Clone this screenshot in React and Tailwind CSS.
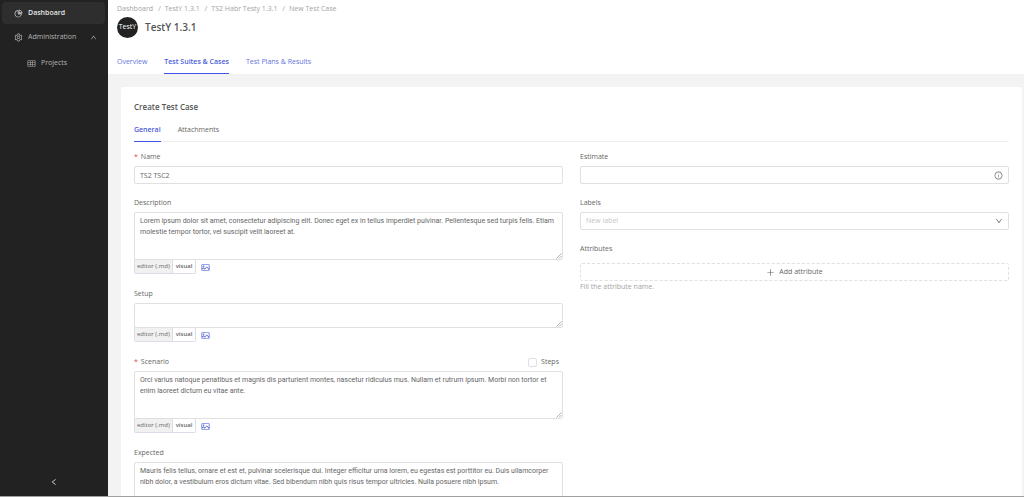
import { useState } from "react"
import {
  AiOutlineDown,
  AiOutlineInfoCircle,
  AiOutlineLeft,
  AiOutlinePicture,
  AiOutlinePieChart,
  AiOutlinePlus,
  AiOutlineSetting,
  AiOutlineTable,
  AiOutlineUp,
} from "react-icons/ai"

const BREADCRUMBS = ["Dashboard", "TestY 1.3.1", "TS2 Habr Testy 1.3.1", "New Test Case"]
const PROJECT_TABS = ["Overview", "Test Suites & Cases", "Test Plans & Results"]
const FORM_TABS = ["General", "Attachments"]

const INITIAL_VALUES = {
  name: "TS2 TSC2",
  description:
    "Lorem ipsum dolor sit amet, consectetur adipiscing elit. Donec eget ex in tellus imperdiet pulvinar. Pellentesque sed turpis felis. Etiam molestie tempor tortor, vel suscipit velit laoreet at.",
  setup: "",
  scenario:
    "Orci varius natoque penatibus et magnis dis parturient montes, nascetur ridiculus mus. Nullam et rutrum ipsum. Morbi non tortor et enim laoreet dictum eu vitae ante.",
  expected:
    "Mauris felis tellus, ornare et est et, pulvinar scelerisque dui. Integer efficitur urna lorem, eu egestas est porttitor eu. Duis ullamcorper nibh dolor, a vestibulum eros dictum vitae. Sed bibendum nibh quis risus tempor ultricies. Nulla posuere nibh ipsum.",
  estimate: "",
}

function Sidebar() {
  return (
    <aside className="flex w-[108px] shrink-0 flex-col bg-[#222222] text-[#b4b4b4]">
      <nav className="flex flex-1 flex-col gap-0.5 py-0.5 pr-[3px] pl-0.5">
        <a href="#dashboard" className="flex h-[22px] items-center gap-[5px] rounded-sm bg-[#2e2e2e] pl-3 font-semibold text-[#e6e6e6]">
          <AiOutlinePieChart className="size-[9px]" />
          Dashboard
        </a>
        <button type="button" className="flex h-[22px] items-center gap-[5px] pr-2 pl-3">
          <AiOutlineSetting className="size-[9px]" />
          Administration
          <AiOutlineUp className="ml-auto size-[7px]" />
        </button>
        <a href="#projects" className="flex h-[26px] items-center gap-[5px] pl-[25px]">
          <AiOutlineTable className="size-[9px]" />
          Projects
        </a>
      </nav>
      <button type="button" aria-label="Collapse menu" className="flex h-7 items-center justify-center text-[#e6e6e6]">
        <AiOutlineLeft className="size-2" />
      </button>
    </aside>
  )
}

function ProjectHeader() {
  const [active, setActive] = useState("Test Suites & Cases")

  return (
    <header className="bg-white px-[9px]">
      <nav aria-label="Breadcrumb" className="flex h-4 items-end gap-[5px] leading-[14px] text-[#a3a3a3]">
        {BREADCRUMBS.map((crumb, index) => (
          <span key={crumb} className="flex gap-1">
            {index > 0 && <span>/</span>}
            <a href="#crumb">{crumb}</a>
          </span>
        ))}
      </nav>
      <div className="mt-px flex items-center gap-[7px]">
        <span className="flex size-[21px] items-center justify-center rounded-full bg-[#222222] text-[7px] text-white">
          TestY
        </span>
        <h1 className="text-[10px] font-semibold text-[#555555]">TestY 1.3.1</h1>
      </div>
      <div className="mt-[13px] flex gap-[17px]">
        {PROJECT_TABS.map((tab) => (
          <button
            key={tab}
            type="button"
            onClick={() => setActive(tab)}
            className={`h-[23px] border-b ${
              tab === active ? "border-[#3d55e6] font-semibold text-[#4a5cdb]" : "border-transparent text-[#6474dd]"
            }`}
          >
            {tab}
          </button>
        ))}
      </div>
    </header>
  )
}

function FieldLabel({ htmlFor, required, children }) {
  return (
    <label htmlFor={htmlFor} className="mb-0.5 flex h-3.5 items-center gap-[3px]">
      {required && <span className="text-[#e04848]">*</span>}
      {children}
    </label>
  )
}

function MarkdownField({ id, label, required, value, onChange, sizeClass = "h-12", extra }) {
  return (
    <div className="mb-[13px]">
      <div className="flex justify-between">
        <FieldLabel htmlFor={id} required={required}>
          {label}
        </FieldLabel>
        {extra}
      </div>
      <div className="relative">
        <textarea
          id={id}
          value={value}
          onChange={(event) => onChange(id, event.target.value)}
          className={`block w-full resize-none overflow-hidden rounded-xs rounded-bl-none border border-[#e0e0e0] px-[5px] py-[3px] font-['Roboto',sans-serif] leading-[11px] outline-none ${sizeClass}`}
        />
        <svg viewBox="0 0 6 6" className="pointer-events-none absolute right-px bottom-px size-1.5" stroke="#8f8f8f" strokeWidth="0.7">
          <path d="M0.5 5.5 5.5 0.5M3 5.5 5.5 3" />
        </svg>
      </div>
      <div className="flex items-center gap-[5px]">
        <div className="flex h-3.5 overflow-hidden rounded-b-xs border border-t-0 border-[#dcdcea] text-[6px]">
          <button type="button" className="border-r border-[#dcdcea] bg-[#f1f1f1] px-0.5">
            editor (.md)
          </button>
          <button type="button" className="px-[3px] font-semibold">
            visual
          </button>
        </div>
        <button type="button" aria-label="Insert image" className="text-[#3247d5]">
          <AiOutlinePicture className="size-[9px]" />
        </button>
      </div>
    </div>
  )
}

function TestCaseForm() {
  const [values, setValues] = useState(INITIAL_VALUES)
  const [hasSteps, setHasSteps] = useState(false)

  const handleChange = (field, value) => setValues((current) => ({ ...current, [field]: value }))

  return (
    <form className="grid grid-cols-2 gap-[17px] pt-2">
      <div>
        <div className="mb-3">
          <FieldLabel htmlFor="name" required>
            Name
          </FieldLabel>
          <input
            id="name"
            type="text"
            value={values.name}
            onChange={(event) => handleChange("name", event.target.value)}
            className="block h-[18px] w-full rounded-xs border border-[#e0e0e0] px-[5px] outline-none"
          />
        </div>
        <MarkdownField id="description" label="Description" value={values.description} onChange={handleChange} />
        <MarkdownField id="setup" label="Setup" value={values.setup} onChange={handleChange} sizeClass="h-[25px]" />
        <MarkdownField
          id="scenario"
          label="Scenario"
          required
          value={values.scenario}
          onChange={handleChange}
          extra={
            <label className="flex h-3.5 items-center gap-1 pr-1">
              <input
                type="checkbox"
                checked={hasSteps}
                onChange={(event) => setHasSteps(event.target.checked)}
                className="size-[9px] appearance-none rounded-xs border border-[#e0e0e0] checked:bg-[#3247d5]"
              />
              Steps
            </label>
          }
        />
        <MarkdownField
          id="expected"
          label="Expected"
          value={values.expected}
          onChange={handleChange}
          sizeClass="h-16"
        />
      </div>

      <div>
        <div className="mb-3">
          <FieldLabel htmlFor="estimate">Estimate</FieldLabel>
          <div className="flex h-[18px] items-center rounded-xs border border-[#e0e0e0] px-[5px]">
            <input
              id="estimate"
              type="text"
              value={values.estimate}
              onChange={(event) => handleChange("estimate", event.target.value)}
              className="min-w-0 flex-1 outline-none"
            />
            <AiOutlineInfoCircle className="size-[9px]" />
          </div>
        </div>
        <div className="mb-3">
          <FieldLabel htmlFor="labels">Labels</FieldLabel>
          <div className="relative">
            <select
              id="labels"
              defaultValue=""
              className="block h-[18px] w-full appearance-none rounded-xs border border-[#e0e0e0] px-[5px] text-[#c4c4c4] outline-none"
            >
              <option value="">New label</option>
            </select>
            <AiOutlineDown className="pointer-events-none absolute inset-y-0 right-1.5 my-auto size-2" />
          </div>
        </div>
        <p className="mb-[7px] flex h-3.5 items-center">Attributes</p>
        <button
          type="button"
          className="flex h-[18px] w-full items-center justify-center gap-1 rounded-xs border border-dashed border-[#e0e0e0]"
        >
          <AiOutlinePlus className="size-[9px]" />
          Add attribute
        </button>
        <p className="leading-3 text-[#a3a3a3]">Fill the attribute name.</p>
      </div>
    </form>
  )
}

export default function App() {
  const [formTab, setFormTab] = useState("General")

  return (
    <div className="flex h-screen overflow-hidden border-b border-[#a0a0a0] bg-[#f3f3f3] font-['Open_Sans',sans-serif] text-[7px] text-[#666666]">
      <Sidebar />
      <main className="min-w-0 flex-1 overflow-hidden">
        <ProjectHeader />
        <section className="mt-[13px] mr-0.5 ml-[13px] rounded-t-xs bg-white px-[13px] pt-3.5">
          <h2 className="text-[8px] leading-3 font-semibold text-[#555555]">Create Test Case</h2>
          <div className="mt-1.5 flex gap-[17px] border-b border-[#f0f0f0]">
            {FORM_TABS.map((tab) => (
              <button
                key={tab}
                type="button"
                onClick={() => setFormTab(tab)}
                className={`-mb-px h-[23px] border-b ${
                  tab === formTab ? "border-[#3d55e6] font-semibold text-[#4a5cdb]" : "border-transparent"
                }`}
              >
                {tab}
              </button>
            ))}
          </div>
          <TestCaseForm />
        </section>
      </main>
    </div>
  )
}
